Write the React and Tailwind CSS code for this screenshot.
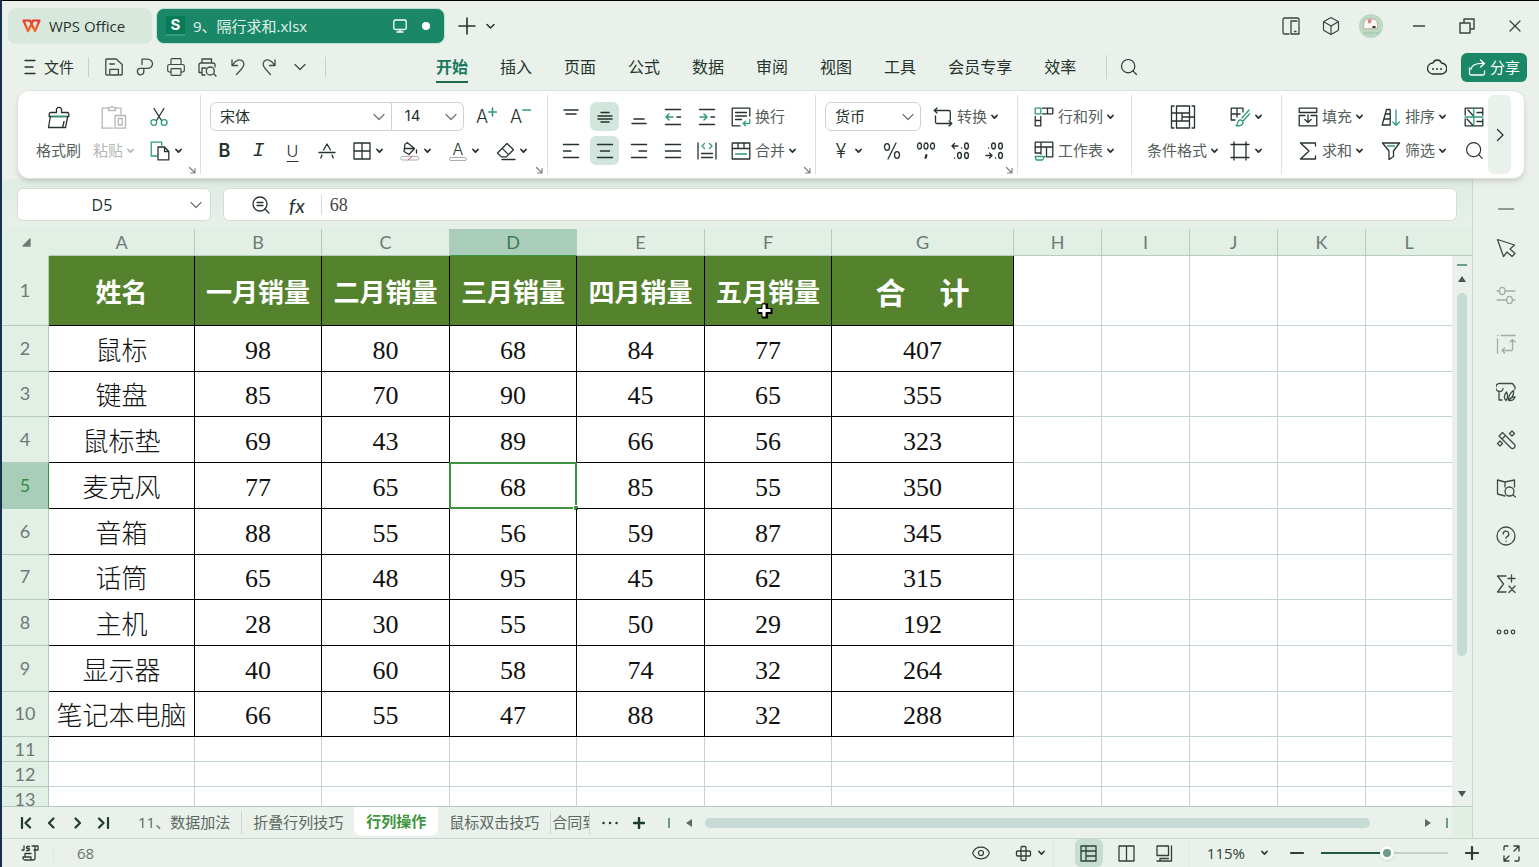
import { Printer, Search, Box, Eye, X } from "lucide-react"

const G = "#2f9a7b"

function Icon({ w = 20, h = w, sw = 1.3, children, className = "" }) {
  return (
    <svg
      width={w}
      height={h}
      viewBox={`0 0 ${w} ${h}`}
      fill="none"
      stroke="currentColor"
      strokeWidth={sw}
      strokeLinecap="round"
      strokeLinejoin="round"
      aria-hidden="true"
      className={`shrink-0 ${className}`}
    >
      {children}
    </svg>
  )
}

const Caret = () => (
  <Icon w={7} h={6} sw={1.8}><path d="M1 1.5l2.5 2.6L6 1.5" /></Icon>
)

const Chevron = ({ className }) => (
  <Icon w={12} h={8} sw={1.2} className={className}><path d="M1 1.5l5 5 5-5" /></Icon>
)

const Launcher = () => (
  <button aria-label="更多设置" className="mr-1 self-end text-[#7b8580]">
    <Icon w={8} h={8} sw={1.2}><path d="M1.5 1.5l5 5M7 2.5V7H2.5" /></Icon>
  </button>
)

const SaveIcon = () => (
  <Icon><path d="M4.5 18H2.8A1 1 0 0 1 1.8 17V3a1 1 0 0 1 1-1h9.4l6 5.6V17a1 1 0 0 1-1 1h-1.5M5.8 18v-5.6h8.6V18M5.8 18h8.6M5.8 7h4.6" /></Icon>
)

const PdfIcon = () => (
  <Icon><path d="M7 7.5V2.2h5.5a5 4.6 0 0 1 0 9.2H5.4a3.2 3.2 0 1 0 3.4 3.2v-3" /></Icon>
)

const PreviewIcon = () => (
  <Icon><path d="M5 6V2h9.5v4M4 15.5H2V8a2 2 0 0 1 2-2h12a2 2 0 0 1 2 2v2M5 18v-7h4M5 18h3M17 17l2 2" /><circle cx="13.3" cy="14" r="4" /></Icon>
)

const BrushIcon = () => (
  <Icon w={24}><path d="M9.5 7.5V5.6a2.6 2.6 0 1 1 5 0v1.9h5.7a1.6 1.6 0 0 1 1.6 1.6v2.4H2.2V9.1a1.6 1.6 0 0 1 1.6-1.6h5.7M3.4 11.5L1.5 22.5h17l2.2-11M15.6 22.5l1.4-6" /><path d="M5 11.5h14" stroke={G} /></Icon>
)

const PasteIcon = () => (
  <Icon w={26} h={24}><path d="M7 3.2H1.2v20H12M20 9V3.2h-5.2M7.5 5.5V2.6h2a1.7 1.7 0 0 1 3 0h2v2.9zM14 10.5h10.5v12.7H14zM17.3 13.5h4v6.5h-4z" /></Icon>
)

const CutIcon = () => (
  <Icon w={18} h={20}><path d="M4 1.5l7.5 12M14 1.5l-7.5 12" /><g stroke={G}><circle cx="3.8" cy="15.5" r="2.9" /><circle cx="14.2" cy="15.5" r="2.9" /></g></Icon>
)

const CopyIcon = () => (
  <Icon><path d="M7 15H1.2V1.2h10.5V4" stroke={G} /><path d="M8 6h6.5l4.3 4.5v8.3H8zM14.5 6v4.5h4.3" /></Icon>
)

const FillIcon = () => (
  <Icon><path d="M7 1.5l7.5 6-5.5 6-5-3 1-7.5 3-1M4.2 7.5h10.3M16.5 9v3" /><rect x=".8" y="15.4" width="18" height="3.6" rx="1.8" stroke="#a9afac" strokeWidth="1" /><path d="M8 19l4-3.6" stroke="#e05a5a" strokeWidth="1" /></Icon>
)

const EraserIcon = () => (
  <Icon><path d="M1.5 12L11 2.5l6.5 6.2-7.2 7.2H5.4zM6.2 7.4l6.4 6.2M6 18.5h13" /></Icon>
)

const WrapIcon = () => (
  <Icon><path d="M18.8 9V1.2H1.2v17.6H9M4.5 5.5h11M4.5 9h11M4.5 12.5h6" /><path d="M18.8 12.5v3.8h-6.3m2-2.2l-2.2 2.2 2.2 2.4" stroke={G} /></Icon>
)

const MergeIcon = () => (
  <Icon><path d="M1.2 2h17.6v16H1.2zM1.2 7.5h17.6M7 2v5.5M13 2v5.5" /><path d="M4.5 13h11" stroke={G} /></Icon>
)

const ConvertIcon = () => (
  <Icon><path d="M4 1L1.2 3.5 4 6M1.5 3.5h14.3a1.5 1.5 0 0 1 1.5 1.5v8M16 19l2.8-2.5L16 14M18.5 16.5H4A1.5 1.5 0 0 1 2.5 15V9" /></Icon>
)

const RowColIcon = () => (
  <Icon><path d="M8.5 1.2h10.3v5.6H8.5M13.5 1.2v5.6M1.2 9.5v9.3h5.6V9.5M1.2 13.5h5.6" /><path d="M1.2 1.2h5.6v5.6H1.2z" stroke={G} /></Icon>
)

const SheetIcon = () => (
  <Icon><path d="M1.2 12V1.2h17.6v14.6H12M1.2 6h17.6M7 1.2V13M12.5 6v9.5M1.2 12h5.5" /><path d="M1.2 15.5h9.3L8.5 19H2.2z" stroke={G} /></Icon>
)

const CondIcon = () => (
  <Icon w={26}><path d="M4 2H1.5v22H4M22 2h2.5v22H22M1.5 9H7M1.5 17H7M6.5 2h13v7h-13zM6.5 17h13v7h-13zM6.5 9v8M12 9v8M12 13h12.500M19.5 9v8" /></Icon>
)

const TableStyleIcon = () => (
  <Icon><path d="M13 5V1.2H1.2V13H5M7 1.2V10M1.2 7H10" /><path d="M19 3l-7 8M19.5 7l-6 6.5M6 18.5c2 .5 7 .5 7-3a2.6 2.6 0 0 0-4.6-1.5C7.500 15 8 17.5 6 18.5z" stroke={G} /></Icon>
)

const FrameIcon = () => (
  <Icon><path d="M4 1v18M16 1v18M1 3.5h18M1 16.5h18" /></Icon>
)

const FillDownIcon = () => (
  <Icon><path d="M1.2 5V1.2h17.6V5M1.2 5.5h17.6M7 8.5H1.2v10.3h17.6V8.5H13M10 8v7.5M6.8 12.5l3.2 3 3.2-3" /></Icon>
)

const SortIcon = () => (
  <Icon><path d="M5.5 2.5L1.2 18h8V2.5zM4.5 7h4.7M3.2 12h6" /><path d="M15 3v15M11.8 15l3.2 3.3 3.5-3.3" stroke={G} /></Icon>
)

const SigmaIcon = () => (
  <Icon><path d="M17.500 5V2h-15l8.5 8-8.5 8h15v-3" /></Icon>
)

const FilterIcon = () => (
  <Icon><path d="M1.500 2h17L12.5 10v5.5l-4.5 3V10z" /><path d="M6.5 5h7" stroke={G} /></Icon>
)

const FreezeIcon = () => (
  <Icon><path d="M1.2 8V1.2h17.6V8M1.2 12v6.800h17.6V12M4 3l5.500 6M3 12l6 6.5M13 5.500h5.8M13 14.500h5.8" /><path d="M9.8 1v18M1 10h18" stroke={G} /></Icon>
)

// horizontal strokes for the alignment buttons: [x1, x2, y]
const Lines = ({ rows }) => (
  <Icon sw={1.5}><path d={rows.map(([a, b, y]) => `M${a} ${y}H${b}`).join("")} /></Icon>
)

function Tool({ label, active, children, className = "" }) {
  return (
    <button
      aria-label={label}
      className={`flex h-[29px] w-[29px] shrink-0 items-center justify-center rounded-md ${active ? "bg-[#d2e6de]" : ""} ${className}`}
    >
      {children}
    </button>
  )
}

function Split({ label, children }) {
  return (
    <button aria-label={label} className="flex h-[29px] w-[43px] shrink-0 items-center justify-center gap-1">
      {children}
      <Caret />
    </button>
  )
}

function TextTool({ icon, text, caret, className = "" }) {
  return (
    <button className={`flex h-[29px] shrink-0 items-center gap-1 whitespace-nowrap ${className}`}>
      {icon}
      {text && <span className="text-[#56605b]">{text}</span>}
      {caret && <Caret />}
    </button>
  )
}

function Pick({ label, value, className }) {
  return (
    <div className={`relative h-[29px] border border-[#cdd3d0] ${className}`}>
      <select aria-label={label} className="h-full w-full appearance-none bg-transparent pl-[9px] outline-none">
        <option>{value}</option>
      </select>
      <Chevron className="pointer-events-none absolute top-[10px] right-[6px] text-[#6b7571]" />
    </div>
  )
}

function Group({ children, className }) {
  return (
    <div className={`flex h-[79px] shrink-0 justify-between border-r border-[#dce1de] ${className}`}>
      {children}
    </div>
  )
}

const Rows = ({ children, className = "" }) => (
  <div className={`flex min-w-0 flex-col gap-[5px] pt-[7px] ${className}`}>{children}</div>
)

const Row = ({ children, className = "gap-[5px]" }) => (
  <div className={`flex items-center ${className}`}>{children}</div>
)

const letter = "font-['Inter'] text-lg font-light"

function TitleBar() {
  return (
    <header className="flex h-11 items-center pt-[6px] pl-[6px]">
      <button className="flex h-9 w-[144px] items-center gap-2 rounded-lg bg-[#d9e8dd] pl-[14px] text-[15px] text-[#26332d]">
        <svg width="19" height="14" viewBox="0 0 19 14" fill="none" stroke="url(#wps)" strokeWidth="2.2" strokeLinejoin="round" aria-hidden="true">
          <defs>
            <linearGradient id="wps" x1="0" y1="0" x2="0" y2="1">
              <stop offset="0" stopColor="#e8392c" />
              <stop offset="1" stopColor="#f4702a" />
            </linearGradient>
          </defs>
          <path d="M1.5 1.5H8L13 12.2 17.5 1.5H11.2L6 12.2z" />
        </svg>
        WPS Office
      </button>
      <div className="ml-1 flex h-9 w-[289px] items-center rounded-lg border border-[#bfe0d2] bg-[#1a8766] pr-[14px] pl-[9px] text-white">
        <span className="flex h-5 w-[19px] items-center justify-center border-b-2 border-[#2da27f] bg-[#077a58] font-['Inter'] text-[15px] font-bold">S</span>
        <span className="ml-2 flex-1 text-[15px] text-[#e2f3ec]">9、隔行求和.xlsx</span>
        <Icon w={14} h={14}><rect x=".8" y="1" width="12.4" height="9.5" rx="1.5" /><path d="M4 13h6M7 10.5V13" /></Icon>
        <span className="ml-[15px] h-2 w-2 rounded-full bg-white" />
      </div>
      <button aria-label="新建" className="ml-3 p-px"><Icon w={18} sw={1.6}><path d="M9 1v16M1 9h16" /></Icon></button>
      <button aria-label="标签列表" className="ml-2 p-px"><Icon w={9} h={7} sw={1.5}><path d="M1 1.5l3.5 3.5L8 1.5" /></Icon></button>
      <div className="ml-auto flex items-center text-[#36443d]">
        <button aria-label="手机" className="flex w-10 justify-center">
          <Icon w={18}><path d="M5 17H2.5A1.5 1.5 0 0 1 1 15.500v-13A1.5 1.5 0 0 1 2.5 1h13A1.500 1.5 0 0 1 17 2.5V17H9V4h6M12.5 14.5h1.5M7 17H5" /></Icon>
        </button>
        <button aria-label="应用" className="flex w-10 justify-center"><Box size={20} strokeWidth={1.4} /></button>
        <button aria-label="账号" className="mr-1 flex w-10 justify-center">
          <svg width="24" height="24" viewBox="0 0 24 24" aria-hidden="true">
            <circle cx="12" cy="12" r="12" fill="#bcd9c3" />
            <path d="M5 15c-1-5 0-10 4-10h5c4 0 5 4 4.5 9.5z" fill="#fbf6f3" stroke="#b78f88" strokeWidth=".7" />
            <path d="M9 5.5h4l-1.5 4L9 9z" fill="#d98078" />
            <rect x="13.5" y="12" width="3" height="2" fill="#3a3333" />
            <path d="M4 19h16" stroke="#8fb39a" strokeWidth=".6" />
          </svg>
        </button>
        <button aria-label="最小化" className="flex w-12 justify-center"><Icon w={12}><path d="M0 6h12" /></Icon></button>
        <button aria-label="还原" className="flex w-12 justify-center"><Icon w={16} sw={1.4}><path d="M1 5h10v10H1zM5 5V1h10v10h-4" /></Icon></button>
        <button aria-label="关闭" className="flex w-12 justify-center"><X size={20} strokeWidth={1.5} /></button>
      </div>
    </header>
  )
}

const menus = ["开始", "插入", "页面", "公式", "数据", "审阅", "视图", "工具", "会员专享", "效率"]

function MenuBar() {
  return (
    <nav className="mb-px flex h-11 items-center text-base">
      <button className="flex w-[86px] items-center gap-2 pl-[22px] text-[15px]">
        <Icon w={12} h={16}><path d="M1 1.5h10M1 8h8M1 14.5h10" /></Icon>
        文件
      </button>
      <div className="flex h-5 w-[238px] items-center border-x border-[#c8d0cb] pl-[9px] text-[#3c4c44]">
        <button aria-label="保存" className="flex w-[31px] justify-center"><SaveIcon /></button>
        <button aria-label="输出为PDF" className="flex w-[31px] justify-center"><PdfIcon /></button>
        <button aria-label="打印" className="flex w-[31px] justify-center"><Printer size={20} strokeWidth={1.4} /></button>
        <button aria-label="打印预览" className="flex w-[31px] justify-center"><PreviewIcon /></button>
        <button aria-label="撤销" className="flex w-[31px] justify-center">
          <Icon><path d="M4 3v5.5h5.5M4.500 8C8 2.500 12.5 1.5 15 4.5c2 3 1 5.5-6.5 13" /></Icon>
        </button>
        <button aria-label="恢复" className="flex w-[31px] justify-center">
          <Icon><path d="M16 3v5.5h-5.5M15.500 8C12 2.5 7.5 1.5 5 4.5c-2 3-1 5.5 6.5 13" /></Icon>
        </button>
        <button aria-label="自定义" className="flex w-[31px] justify-center"><Chevron /></button>
      </div>
      <div className="ml-[94px] flex">
        {menus.map((m, i) => (
          <button key={m} className="flex flex-col px-4">
            <span className={`h-8 border-b-2 leading-8 whitespace-nowrap ${i === 0 ? "border-[#1c6b52] font-bold text-[#1a7a5c]" : "border-transparent"}`}>{m}</span>
          </button>
        ))}
      </div>
      <span className="ml-[14px] h-6 w-px bg-[#c8d0cb]" />
      <button aria-label="搜索" className="ml-3"><Search size={20} strokeWidth={1.4} /></button>
      <button aria-label="云端" className="ml-auto">
        <Icon w={20} h={18}><path d="M6 5a4.5 4.5 0 0 1 8.5 0A5.500 5.500 0 0 1 14 16H6A5.500 5.5 0 0 1 6 5z" /><path d="M6 11h.1M10 11h.1M14 11h.1" strokeWidth="1.8" /></Icon>
      </button>
      <button className="mr-3 ml-[14px] flex h-[29px] items-center gap-1 rounded-md bg-[#1a8766] px-[7px] text-[15px] whitespace-nowrap text-white">
        <Icon w={18} h={17}><path d="M1.5 9v5.5A1.5 1.5 0 0 0 3 16h12a1.5 1.5 0 0 0 1.5-1.5V12M3 10c1-4 5-6 13-5.5M12.5 1l4 3.5-4 3.5" /></Icon>
        分享
      </button>
    </nav>
  )
}

function Ribbon() {
  return (
    <div className="z-10 mr-[14px] ml-[15px] flex rounded-xl border border-[#dde4df] bg-white py-1 text-[15px] shadow-md">
      <Group className="w-[183px]">
        <div className="flex pt-[7px]">
          <button className="ml-[18px] flex flex-col items-center gap-[5px]">
            <span className="flex h-[29px] items-center"><BrushIcon /></span>
            <span className="h-[29px] leading-[29px] text-[#56605b]">格式刷</span>
          </button>
          <button className="ml-3 flex flex-col items-center gap-[5px] text-[#b3b8b5]">
            <span className="flex h-[29px] items-center"><PasteIcon /></span>
            <span className="flex h-[29px] items-center gap-1">粘贴<Caret /></span>
          </button>
          <div className="ml-4 flex flex-col gap-[5px]">
            <button aria-label="剪切" className="flex h-[29px] items-center"><CutIcon /></button>
            <button aria-label="复制" className="flex h-[29px] items-center gap-[5px]"><CopyIcon /><Caret /></button>
          </div>
        </div>
        <Launcher />
      </Group>

      <Group className="w-[347px]">
        <Rows className="pl-[9px]">
          <Row className="gap-0">
            <Pick label="字体" value="宋体" className="w-[183px] rounded-l-md" />
            <Pick label="字号" value="14" className="mr-2 w-[73px] rounded-r-md border-l-0 pl-1 font-['Inter']" />
            <Tool label="增大字号">
              <span className={letter}>A</span>
              <Icon w={9} h={20} sw={1.6}><path d="M4.5 1v8M.8 5h7.5" stroke={G} /></Icon>
            </Tool>
            <Tool label="减小字号" className="ml-[5px]">
              <span className={letter}>A</span>
              <Icon w={9} h={20} sw={1.6}><path d="M.8 3h7.5" stroke={G} /></Icon>
            </Tool>
          </Row>
          <Row>
            <Tool label="加粗"><span className="font-['Inter'] text-lg font-semibold">B</span></Tool>
            <Tool label="倾斜"><span className="font-['Liberation_Mono'] text-xl italic">I</span></Tool>
            <Tool label="下划线"><span className="font-['Inter'] text-base font-light underline underline-offset-4">U</span></Tool>
            <Tool label="删除线">
              <Icon w={18}><path d="M5.500 8L9 2l3.500 6M4 13l-1.200 3M14 13l1.200 3M1 10.5h16" /></Icon>
            </Tool>
            <Split label="边框"><Icon><path d="M2 2h16v16H2zM10 2v16M2 10h16" /></Icon></Split>
            <Split label="填充颜色"><FillIcon /></Split>
            <Split label="字体颜色">
              <span className="flex w-5 flex-col items-center">
                <span className="font-['Inter'] text-base leading-4 font-light">A</span>
                <span className="h-1 w-[18px] rounded-full border border-[#a9afac]" />
              </span>
            </Split>
            <Split label="清除"><EraserIcon /></Split>
          </Row>
        </Rows>
        <Launcher />
      </Group>

      <Group className="w-[268px]">
        <Rows className="pl-2">
          <Row>
            <Tool label="顶端对齐"><Lines rows={[[3, 17, 3], [5, 15, 7]]} /></Tool>
            <Tool label="垂直居中" active><Lines rows={[[6, 14, 5.5], [3, 17, 9], [3, 17, 12], [6, 14, 15]]} /></Tool>
            <Tool label="底端对齐"><Lines rows={[[5, 15, 12], [3, 17, 16.5]]} /></Tool>
            <Tool label="减少缩进">
              <Icon sw={1.5}><path d="M2.5 2.500h15M2.5 17.5h15M14 10h3.500" /><path d="M10 10H3M6 7l-3 3 3 3" stroke={G} /></Icon>
            </Tool>
            <Tool label="增加缩进">
              <Icon sw={1.5}><path d="M2.5 2.500h15M2.5 17.5h15M14 10h3.500" /><path d="M3 10h7M7 7l3 3-3 3" stroke={G} /></Icon>
            </Tool>
            <TextTool icon={<WrapIcon />} text="换行" className="ml-[5px]" />
          </Row>
          <Row>
            <Tool label="左对齐"><Lines rows={[[2.5, 17.5, 3.5], [2.5, 10, 10], [2.5, 17.5, 16.5]]} /></Tool>
            <Tool label="居中" active><Lines rows={[[2.5, 17.5, 3.5], [5.5, 14.5, 10], [2.5, 17.5, 16.5]]} /></Tool>
            <Tool label="右对齐"><Lines rows={[[2.5, 17.5, 3.5], [10, 17.5, 10], [2.5, 17.5, 16.5]]} /></Tool>
            <Tool label="两端对齐"><Lines rows={[[2.5, 17.5, 3.5], [2.5, 17.5, 10], [2.5, 17.5, 16.5]]} /></Tool>
            <Tool label="分散对齐">
              <Icon><path d="M1 2v16M19 2v16M4.5 12.5h11M4.5 16.5h11" /><path d="M7.5 2.5L5 5l2.5 2.5M12.5 2.5L15 5l-2.5 2.5" stroke={G} /></Icon>
            </Tool>
            <TextTool icon={<MergeIcon />} text="合并" caret className="ml-[5px]" />
          </Row>
        </Rows>
        <Launcher />
      </Group>

      <Group className="w-[202px]">
        <Rows className="pl-[9px]">
          <Row className="gap-3">
            <Pick label="数字格式" value="货币" className="w-24 rounded-md" />
            <TextTool icon={<ConvertIcon />} text="转换" caret />
          </Row>
          <Row>
            <Split label="会计格式"><span className="w-5 text-center font-['Inter'] text-xl font-light">¥</span></Split>
            <Tool label="百分比" className="ml-1">
              <Icon><ellipse cx="5" cy="6" rx="2.5" ry="3.3" /><ellipse cx="15" cy="14" rx="2.5" ry="3.3" /><path d="M14 2L6 18" /></Icon>
            </Tool>
            <Tool label="千位分隔">
              <Icon><ellipse cx="3.5" cy="5" rx="2" ry="3" /><ellipse cx="10" cy="5" rx="2" ry="3" /><ellipse cx="16.5" cy="5" rx="2" ry="3" /><path d="M10.3 14v.8l-.8 2" strokeWidth="2.2" /></Icon>
            </Tool>
            <Tool label="增加小数">
              <Icon sw={1.4}><path d="M8 5H2M4.5 2.5L2 5l2.5 2.5M11.5 7h.1M4.5 17h.1" /><ellipse cx="16.5" cy="5" rx="1.9" ry="3" /><ellipse cx="9.5" cy="14.5" rx="1.9" ry="3" /><ellipse cx="16.5" cy="14.5" rx="1.9" ry="3" /></Icon>
            </Tool>
            <Tool label="减少小数">
              <Icon sw={1.4}><path d="M2 14.5h6M5.5 12L8 14.5 5.5 17M11.5 17h.1M4.5 7h.1" /><ellipse cx="16.5" cy="5" rx="1.9" ry="3" /><ellipse cx="9.5" cy="5" rx="1.9" ry="3" /><ellipse cx="16.5" cy="14.5" rx="1.9" ry="3" /></Icon>
            </Tool>
          </Row>
        </Rows>
        <Launcher />
      </Group>

      <Group className="w-[114px]">
        <Rows className="pl-4">
          <TextTool icon={<RowColIcon />} text="行和列" caret />
          <TextTool icon={<SheetIcon />} text="工作表" caret />
        </Rows>
      </Group>

      <Group className="w-[150px]">
        <div className="flex gap-3 pt-[7px] pl-[15px]">
          <button className="flex flex-col items-center gap-[5px]">
            <span className="flex h-[29px] items-center"><CondIcon /></span>
            <span className="flex h-[29px] items-center gap-1 whitespace-nowrap"><span className="text-[#56605b]">条件格式</span><Caret /></span>
          </button>
          <div className="flex flex-col gap-[5px]">
            <button aria-label="表格样式" className="flex h-[29px] items-center gap-[5px]"><TableStyleIcon /><Caret /></button>
            <button aria-label="单元格样式" className="flex h-[29px] items-center gap-[5px]"><FrameIcon /><Caret /></button>
          </div>
        </div>
      </Group>

      <div className="flex min-w-0 flex-1 overflow-hidden">
        <Rows className="pl-4">
          <Row className="gap-[18px]">
            <TextTool icon={<FillDownIcon />} text="填充" caret />
            <TextTool icon={<SortIcon />} text="排序" caret />
            <Tool label="冻结" className="justify-start"><FreezeIcon /></Tool>
          </Row>
          <Row className="gap-[18px]">
            <TextTool icon={<SigmaIcon />} text="求和" caret />
            <TextTool icon={<FilterIcon />} text="筛选" caret />
            <Tool label="查找" className="justify-start"><Search size={21} strokeWidth={1.3} /></Tool>
          </Row>
        </Rows>
      </div>
      <button aria-label="展开" className="mr-[13px] flex w-[23px] items-center justify-center rounded-md bg-[#e9f1ea]">
        <Icon w={8} h={14}><path d="M1.5 1.5L7 7l-5.500 5.5" /></Icon>
      </button>
    </div>
  )
}

function FormulaBar() {
  return (
    <div className="flex gap-3 bg-linear-to-b from-[#dfede4] to-[#e7f0e8] pt-[9px] pr-[15px] pb-2 pl-[15px]">
      <div className="flex h-[33px] w-[194px] items-center rounded-md border border-[#d3ddd7] bg-white pr-2">
        <input aria-label="名称框" defaultValue="D5" className="w-full min-w-0 flex-1 bg-transparent pr-1 text-center text-base outline-none" />
        <Chevron className="text-[#6b7571]" />
      </div>
      <div className="flex h-[33px] min-w-0 flex-1 items-center rounded-md border border-[#d3ddd7] bg-white pl-7">
        <button aria-label="搜索公式">
          <Icon w={18}><circle cx="8" cy="8" r="7" /><path d="M13 13l4 4M5 6.5h6M5 9.5h6" /></Icon>
        </button>
        <button aria-label="插入函数" className="ml-[19px] font-['Lato'] text-xl leading-5 italic">fx</button>
        <span className="ml-4 h-5 w-px bg-[#d5dbd8]" />
        <input aria-label="编辑栏" defaultValue="68" className="ml-2 min-w-0 flex-1 bg-transparent font-['Liberation_Serif'] text-lg text-[#444] outline-none" />
      </div>
    </div>
  )
}

const cols = ["A", "B", "C", "D", "E", "F", "G", "H", "I", "J", "K", "L"]
const widths = [
  "w-[146px]", "w-[127px]", "w-[128px]", "w-[127px]", "w-[128px]", "w-[127px]",
  "w-[182px]", "w-[88px]", "w-[88px]", "w-[88px]", "w-[88px]", "",
]
const heads = ["姓名", "一月销量", "二月销量", "三月销量", "四月销量", "五月销量", "合     计"]
const data = [
  ["鼠标", 98, 80, 68, 84, 77, 407],
  ["键盘", 85, 70, 90, 45, 65, 355],
  ["鼠标垫", 69, 43, 89, 66, 56, 323],
  ["麦克风", 77, 65, 68, 85, 55, 350],
  ["音箱", 88, 55, 56, 59, 87, 345],
  ["话筒", 65, 48, 95, 45, 62, 315],
  ["主机", 28, 30, 55, 50, 29, 192],
  ["显示器", 40, 60, 58, 74, 32, 264],
  ["笔记本电脑", 66, 55, 47, 88, 32, 288],
]

function RowHead({ n, active }) {
  return (
    <th
      scope="row"
      className={`border-r border-b p-0 font-normal ${n < 11 ? "pb-[2px]" : ""} ${active ? "border-r-[#3f9440] border-b-[#a9cdb9] bg-[#a9cdb9] text-[#2f8f46]" : "border-[#b4ccc0] bg-[#e1efe4]"}`}
    >
      {n}
    </th>
  )
}

function Blank({ count }) {
  return Array.from({ length: count }, (_, i) => (
    <td key={i} className={`border-b border-[#c5d6d1] p-0 ${i < count - 1 ? "border-r" : ""}`} />
  ))
}

function Sheet() {
  return (
    <div className="min-h-0 min-w-0 flex-1 overflow-hidden border-b border-[#b4ccc0] bg-white">
      <table className="w-full table-fixed border-separate border-spacing-0 text-center">
        <colgroup>
          <col className="w-[47px]" />
          {cols.map((c, i) => <col key={c} className={widths[i]} />)}
        </colgroup>
        <thead className="bg-[#e1efe4] font-['Lato'] text-lg leading-6 text-[#6f7a75]">
          <tr className="h-[27px]">
            <td className="border-b border-[#e1efe4] p-0">
              <Icon w={9} h={9} className="ml-5"><path d="M8 1v7H1z" fill="currentColor" /></Icon>
            </td>
            {cols.map((c) => (
              <th
                key={c}
                scope="col"
                className={`border-b p-0 font-normal ${c === "L" ? "" : "border-r"} ${c === "D" ? "border-r-[#b4ccc0] border-b-[#3f9440] bg-[#a9cdb9] text-[#3d7a55]" : "border-[#b4ccc0]"}`}
              >
                {c}
              </th>
            ))}
          </tr>
        </thead>
        <tbody className="font-['Lato'] text-lg leading-6 text-[#6f7a75]">
          <tr className="h-[70px]">
            <RowHead n={1} />
            {heads.map((h) => (
              <td
                key={h}
                className={`relative border-r border-b border-black bg-[#55832d] p-0 font-['Noto_Sans_CJK_SC',sans-serif] font-bold whitespace-pre text-white ${h[0] === "合" ? "text-[30px]" : "text-[26px]"}`}
              >
                {h}
                {h === "五月销量" && (
                  <svg width="18" height="18" viewBox="0 0 18 18" className="absolute top-[46px] left-[51px]" aria-hidden="true">
                    <path d="M6 1.5h6V6h4.5v6H12v4.5H6V12H1.5V6H6z" fill="#000" />
                    <path d="M6 2h4v4.500h5v4h-5v4.5H6v-4.5H2v-4h4z" fill="#fff" stroke="#000" strokeWidth="1" />
                  </svg>
                )}
              </td>
            ))}
            <Blank count={5} />
          </tr>
          {data.map((row, r) => (
            <tr key={row[0]} className={r === 1 || r === 5 || r === 8 ? "h-[45px]" : "h-[46px]"}>
              <RowHead n={r + 2} active={r === 3} />
              {row.map((v, c) => (
                <td
                  key={c}
                  className={`relative border-r border-b border-black p-0 font-['Liberation_Serif','Noto_Sans_CJK_SC',serif] text-[26px] leading-8 font-light whitespace-nowrap text-[#111] ${c === 0 ? "pt-[6px]" : "pt-1"}`}
                >
                  {v}
                  {r === 3 && c === 3 && (
                    <span className="absolute -inset-x-px -top-px -bottom-px border-2 border-[#3f9440]">
                      <span className="absolute -right-[3px] -bottom-[3px] h-[5px] w-[5px] border-t border-l border-white bg-[#3f9440]" />
                    </span>
                  )}
                </td>
              ))}
              <Blank count={5} />
            </tr>
          ))}
          {[11, 12, 13].map((n) => (
            <tr key={n} className="h-[25px] leading-[22px]">
              <RowHead n={n} />
              <Blank count={12} />
            </tr>
          ))}
        </tbody>
      </table>
    </div>
  )
}

function VScroll() {
  return (
    <div className="flex w-5 shrink-0 flex-col items-center border-b border-[#b4ccc0] text-[#4a5751]">
      <span className="h-[27px] w-full shrink-0 border-b border-[#b4ccc0] bg-[#e1efe4]" />
      <span className="mt-2 h-[2px] w-[10px] shrink-0 bg-[#6b9c88]" />
      <button aria-label="向上滚动" className="mt-[9px]"><Icon w={8} h={8} sw={0}><path d="M4 1l4 6H0z" fill="currentColor" /></Icon></button>
      <div className="mt-[10px] min-h-0 w-[10px] flex-1"><div className="h-[73%] rounded-full bg-[#c6dad6]" /></div>
      <button aria-label="向下滚动" className="mb-2"><Icon w={8} h={8} sw={0}><path d="M4 7l4-6H0z" fill="currentColor" /></Icon></button>
    </div>
  )
}

function SheetTabs() {
  return (
    <div className="flex h-[31px] shrink-0 items-center text-[15px] text-[#5d6862]">
      <div className="flex pl-[10px] text-[#1f3b30]">
        {["M4 1v10M12 1.5L7.5 6 12 10.5", "M9.5 1.5L5 6l4.5 4.5", "M5.5 1.5L10 6l-4.5 4.5", "M3 1.5L7.5 6 3 10.5M12 1v10"].map((d) => (
          <button key={d} aria-label="切换工作表" className="flex w-[26px] justify-center"><Icon w={15} h={12} sw={2.2}><path d={d} /></Icon></button>
        ))}
      </div>
      <button className="ml-[11px] border-r border-[#ccd5cf] px-[11px] whitespace-nowrap">11、数据加法</button>
      <button className="px-[11px] whitespace-nowrap">折叠行列技巧</button>
      <button className="mb-[2px] h-[29px] self-start rounded-b-lg bg-white px-3 font-bold whitespace-nowrap text-[#3f9440]">行列操作</button>
      <button className="px-[11px] whitespace-nowrap">鼠标双击技巧</button>
      <button className="w-10 overflow-hidden border-x border-[#ccd5cf] pl-px text-left whitespace-nowrap">合同到</button>
      <button aria-label="更多工作表" className="ml-3 text-[#1f3b30]"><Icon w={16} h={4} sw={2.4}><path d="M1.5 2h.1M8 2h.1M14.5 2h.1" /></Icon></button>
      <button aria-label="新建工作表" className="ml-[15px] text-[#1f3b30]"><Icon w={12} sw={2.4}><path d="M6 1v10M1 6h10" /></Icon></button>
      <span className="ml-[23px] h-[10px] w-[2px] bg-[#6b9c88]" />
      <button aria-label="向左滚动" className="ml-[15px]"><Icon w={8} h={8} sw={0}><path d="M1 4l6-4v8z" fill="currentColor" /></Icon></button>
      <div className="mx-3 min-w-0 flex-1"><div className="h-[10px] w-[94%] rounded-full bg-[#c6dad6]" /></div>
      <button aria-label="向右滚动" className="mr-[14px]"><Icon w={8} h={8} sw={0}><path d="M7 4L1 0v8z" fill="currentColor" /></Icon></button>
      <span className="mr-1 h-[10px] w-[2px] bg-[#6b9c88]" />
      <span className="h-full w-5 bg-[#e1efe2]" />
    </div>
  )
}

const side = [
  ["选择", <path d="M1.5 1.5l17 5.500-4.500 4 5 4.500-3 3-5-4.500-3.500 4.500z" />],
  ["属性", <><path d="M1 5h2.5M9 5h10M1 14h9.5M16.5 14H19" /><ellipse cx="6.2" cy="5" rx="2.8" ry="3.6" /><ellipse cx="13.5" cy="14" rx="2.8" ry="3.6" /></>, true],
  ["对象", <path d="M1.5 1.5h.1M5 1.5h14M1.5 5v14.5M16.5 6v9.5a1 1 0 0 1-1 1H6M14 8l2.5-2.5L19 8M8.5 14L6 16.5 8.5 19" />, true],
  ["样式", <path d="M3 9.5v8.500h3M3 9.500A4 4 0 0 1 4.500 1.500h12L19 5v2M3 9.500c2.500 0 4-1 4-3M10 18.500c-2.500-2.500-2-5.500.5-8.500 1.500 3 1.500 6-.5 8.500zM12.500 18c0-4 1.500-7 5-9.500.5 4-1 7.500-5 9.500zM13 18.500c3 .5 5-1 6-3.500-2.500-.5-4.500 1-6 3.500z" />],
  ["工具", <path d="M3 6l3.500-3.500 12 12a2.500 2.500 0 0 1-3.500 3.500zM6 9l3.500-3.500M16 1l2.500 2.500L16 6l-2.500-2.500zM4 11l2.500 2.500L4 16l-2.500-2.500z" />],
  ["查找", <><path d="M9 18l-7.5-2V2L9 4l9.500-2v7M9 4v5" /><circle cx="13.500" cy="13.5" r="4.5" /><path d="M17 17l2.5 2" /></>],
  ["帮助", <><circle cx="10" cy="10" r="9" /><path d="M7.2 8a2.8 2.8 0 1 1 3.8 2.6c-.8.4-1 .9-1 1.7M10 15.2v.1" /></>],
  ["公式", <path d="M10 2H1.5l6 8-6 8H10M15.5 1v7M12 4.5h7M13 12l6 6.5M19 12l-6 6.5" />],
  ["更多", <><circle cx="3" cy="10" r="1.8" /><circle cx="10" cy="10" r="1.8" /><circle cx="17" cy="10" r="1.8" /></>],
]

function SideBar() {
  return (
    <aside className="flex w-[67px] shrink-0 flex-col items-center border-l border-[#c9d8cf] pt-[14px] text-[#3c4c44]">
      <button aria-label="收起" className="flex h-[31px] items-center"><span className="h-[2px] w-4 bg-[#909a95]" /></button>
      {side.map(([label, shape, off]) => (
        <button key={label} aria-label={label} className={`flex h-12 w-12 items-center justify-center ${off ? "text-[#a3aca7]" : ""}`}>
          <Icon>{shape}</Icon>
        </button>
      ))}
    </aside>
  )
}

function StatusBar() {
  return (
    <footer className="flex h-[29px] shrink-0 items-center border-t border-[#c9d5ce] text-base text-[#2f3f37]">
      <button aria-label="JS宏" className="flex w-[52px] justify-center border-r border-[#dfe7e1] pl-1">
        <Icon w={18}><path d="M3 2v3.5a1 1 0 0 1-2 0M8.5 2.5H6.500a1 1 0 0 0 0 2h1a1 1 0 0 1 0 2H5.5M11 2h6v4h-4M14 3v11a2 2 0 0 1-2 2H4a2 2 0 0 1-2-2v-1h8v3M4 13V9.5h6" /></Icon>
      </button>
      <span className="ml-[23px] text-[15px] text-[#68736d]">68</span>
      <button aria-label="护眼模式" className="ml-auto flex w-10 justify-center"><Eye size={20} strokeWidth={1.4} /></button>
      <button aria-label="阅读布局" className="mr-2 ml-[14px] flex items-center gap-[6px]">
        <Icon w={17}><path d="M6 6V2.500a1 1 0 0 1 1-1h3a1 1 0 0 1 1 1V6h3.5a1 1 0 0 1 1 1v3a1 1 0 0 1-1 1H11v3.5a1 1 0 0 1-1 1H7a1 1 0 0 1-1-1V11H2.5a1 1 0 0 1-1-1V7a1 1 0 0 1 1-1zM6 6h5v5H6z" /></Icon>
        <Caret />
      </button>
      <div className="flex h-full items-center gap-[10px] border-x border-[#dfe7e1] px-[21px] pr-[9px]">
        <button aria-label="普通视图" className="flex h-full w-7 items-center justify-center rounded-md bg-[#c5ded1]">
          <Icon w={17}><path d="M1 1h15v15H1zM1 6h15M6 1v15M6 11h10" /></Icon>
        </button>
        <button aria-label="分页预览" className="flex w-7 justify-center"><Icon w={17}><path d="M1 1h15v15H1zM8.5 1v15" /></Icon></button>
        <button aria-label="页面布局" className="flex w-7 justify-center"><Icon w={17}><path d="M1 1h11.5v9.5H1zM15.5 1v15H1M4 16v-2.5h8.5" /></Icon></button>
      </div>
      <button className="ml-[18px] flex items-center gap-4 text-[15px]">115%<Caret /></button>
      <button aria-label="缩小" className="ml-[22px]"><Icon w={14} sw={2.2}><path d="M1 7h12" /></Icon></button>
      <input
        type="range"
        aria-label="缩放"
        defaultValue="52"
        className="mx-[17px] h-[2px] w-[127px] appearance-none bg-[linear-gradient(to_right,#1d5b48_52%,#c5cfc8_52%)] [&::-webkit-slider-thumb]:h-[14px] [&::-webkit-slider-thumb]:w-[14px] [&::-webkit-slider-thumb]:appearance-none [&::-webkit-slider-thumb]:rounded-full [&::-webkit-slider-thumb]:border-[3px] [&::-webkit-slider-thumb]:border-solid [&::-webkit-slider-thumb]:border-white [&::-webkit-slider-thumb]:bg-[#6b9c88] [&::-webkit-slider-thumb]:shadow"
      />
      <button aria-label="放大"><Icon w={14} sw={2.2}><path d="M7 1v12M1 7h12" /></Icon></button>
      <button aria-label="全屏" className="mr-[19px] ml-6"><Icon w={17}><path d="M1 5V2a1 1 0 0 1 1-1h3M11 1h5v5M16 1l-5 5M16 12v3a1 1 0 0 1-1 1h-3M6 16H1v-5M1 16l5-5" /></Icon></button>
    </footer>
  )
}

export default function App() {
  return (
    <div className="flex h-screen flex-col overflow-hidden border-t border-l-2 border-t-black border-l-[#16324f] bg-[#e9f1ea] font-['Open_Sans','Noto_Sans_CJK_SC',sans-serif] text-[#26332d]">
      <TitleBar />
      <MenuBar />
      <Ribbon />
      <div className="flex min-h-0 flex-1">
        <main className="flex min-w-0 flex-1 flex-col">
          <FormulaBar />
          <div className="flex min-h-0 flex-1">
            <Sheet />
            <VScroll />
          </div>
          <SheetTabs />
        </main>
        <SideBar />
      </div>
      <StatusBar />
    </div>
  )
}
